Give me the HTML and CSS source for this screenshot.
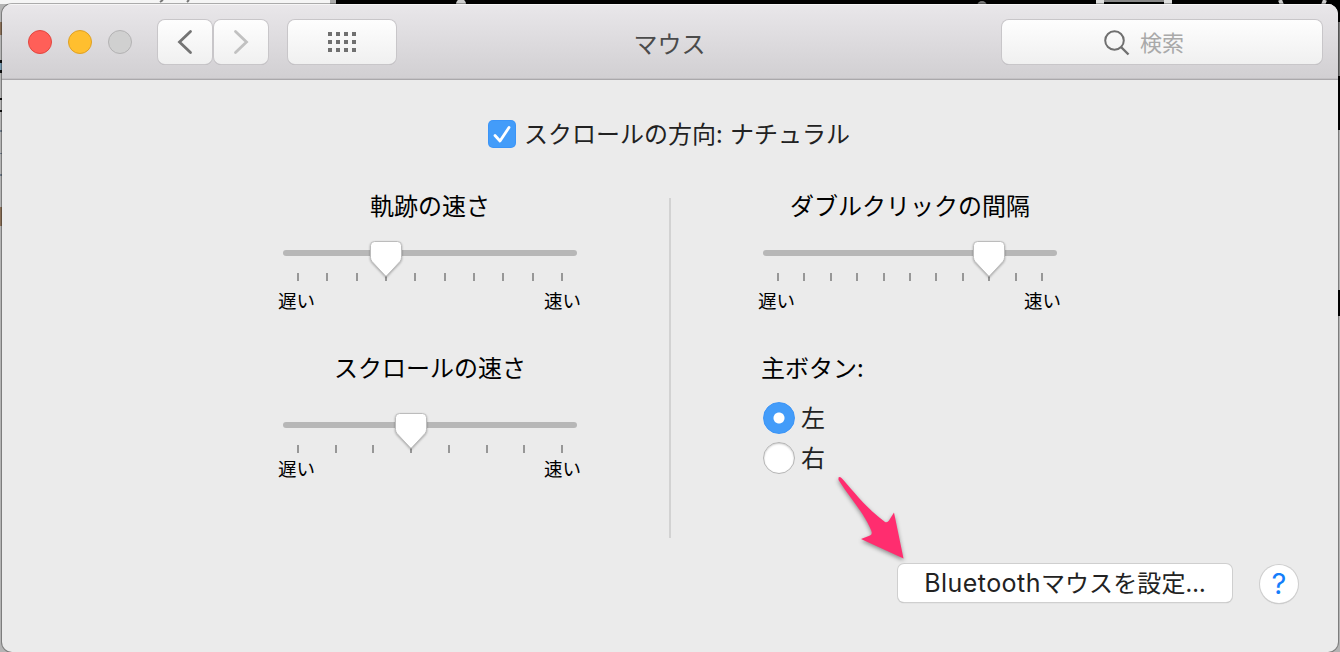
FILE: index.html
```html
<!DOCTYPE html>
<html lang="ja">
<head>
<meta charset="utf-8">
<title>マウス</title>
<link rel="stylesheet" href="styles.css">
</head>
<body>
<svg class="desktop" width="1340" height="652" viewBox="0 0 1340 652">
  <rect width="1340" height="652" fill="#b4b4b4"/>
  <rect width="332" height="4" fill="#f5f5f5"/>
  <rect x="330" width="6" height="4" fill="#aaa"/>
  <rect x="336" width="1004" height="4" fill="#000"/>
  <rect x="1320" width="20" height="130" fill="#000"/>
  <path d="M160 2l3-2M187 2l2-2" stroke="#777" stroke-width="2"/>
  <circle cx="461" cy="4" r="5" fill="#ccc"/>
  <circle cx="982" cy="6" r="5" fill="#777"/>
  <path d="M1100 4V0M1168 4V0" stroke="#ddd" stroke-width="8"/>
  <path d="M1104 1h60" stroke="#888" stroke-width="2"/>
  <path d="M1280 0l2 5M1325 0l-2 5" stroke="#ccc" stroke-width="4"/>
  <path d="M1339 22v54" stroke="#777" stroke-width="2"/>
  <path d="M1339 290v26" stroke="#000" stroke-width="2"/>
  <path d="M0 22h2v13H0zM0 207h2v19H0z" fill="#8a7058"/>
  <path d="M0 60h2v3H0zM0 70h2v3H0zM0 98h2v2H0zM0 110h2v2H0z" fill="#111"/>
  <path d="M0 63h2v7H0z" fill="#7b9eb5"/>
  <path d="M0 130h2v2H0zM0 153h2v1H0zM0 174h2v2H0z" fill="#6f7c8a"/>
</svg>
<div class="window">
  <header class="toolbar">
    <div class="lights">
      <span class="light close"></span>
      <span class="light minimize"></span>
      <span class="light disabled"></span>
    </div>
    <div class="nav">
      <button class="tool"><svg width="54" height="44" viewBox="0 0 54 44"><path d="M32.500 11.500L21.500 22L32.500 32.500" fill="none" stroke="#747474" stroke-width="2.800" stroke-linecap="round"/></svg></button>
      <button class="tool"><svg width="54" height="44" viewBox="0 0 54 44"><path d="M21.500 11.500L32.500 22L21.500 32.500" fill="none" stroke="#c1c1c1" stroke-width="2.800" stroke-linecap="round"/></svg></button>
    </div>
    <button class="tool grid-button"><svg width="28" height="20" viewBox="0 0 28 20" fill="#707070"><path d="M0 0h4v4H0zM8 0h4v4H8zM16 0h4v4h-4zM24 0h4v4h-4zM0 8h4v4H0zM8 8h4v4H8zM16 8h4v4h-4zM24 8h4v4h-4zM0 16h4v4H0zM8 16h4v4H8zM16 16h4v4h-4zM24 16h4v4h-4z"/></svg></button>
    <h1 class="title">マウス</h1>
    <div class="search">
      <svg width="26" height="26" viewBox="0 0 26 26" fill="none" stroke="#707070" stroke-width="2"><circle cx="10.500" cy="10.500" r="9.300"/><path d="M17 17l7.500 7.500" stroke-width="2.400"/></svg>
      <span>検索</span>
    </div>
  </header>
  <main class="content">
    <label class="check-row">
      <svg width="28" height="28" viewBox="0 0 28 28"><rect width="28" height="28" rx="5" fill="#3b94f7"/><rect x="1" y="1" width="26" height="26" rx="4" fill="#439cf9"/><path d="M7 15.500L12 21L21 7.500" fill="none" stroke="#fff" stroke-width="2.800" stroke-linecap="round" stroke-linejoin="round"/></svg>
      <span class="check-text">スクロールの方向: ナチュラル</span>
    </label>
    <div class="columns">
      <section class="column">
        <h2 class="heading">軌跡の速さ</h2>
        <svg class="slider" width="294" height="42" viewBox="0 0 294 42">
          <rect class="track" y="10" width="294" height="6" rx="3"/>
          <path class="ticks" d="M15 33v8M44 33v8M74 33v8M103 33v8M132 33v8M162 33v8M191 33v8M220 33v8M250 33v8M279 33v8"/>
          <path class="thumb" transform="translate(103 0)" d="M-11.500 1.500H11.500Q15.500 1.500 15.500 5.500V17.500Q15.500 19.500 14 21.500L0 36.500L-14 21.500Q-15.500 19.500-15.500 17.500V5.500Q-15.500 1.500-11.500 1.500Z"/>
        </svg>
        <div class="range"><span>遅い</span><span>速い</span></div>
        <h2 class="heading second">スクロールの速さ</h2>
        <svg class="slider lower" width="294" height="42" viewBox="0 0 294 42">
          <rect class="track" y="10" width="294" height="6" rx="3"/>
          <path class="ticks" d="M15 33v8M53 33v8M90 33v8M128 33v8M166 33v8M204 33v8M241 33v8M279 33v8"/>
          <path class="thumb" transform="translate(128 0)" d="M-11.500 1.500H11.500Q15.500 1.500 15.500 5.500V17.500Q15.500 19.500 14 21.500L0 36.500L-14 21.500Q-15.500 19.500-15.500 17.500V5.500Q-15.500 1.500-11.500 1.500Z"/>
        </svg>
        <div class="range tight"><span>遅い</span><span>速い</span></div>
      </section>
      <div class="divider"></div>
      <section class="column">
        <h2 class="heading">ダブルクリックの間隔</h2>
        <svg class="slider" width="294" height="42" viewBox="0 0 294 42">
          <rect class="track" y="10" width="294" height="6" rx="3"/>
          <path class="ticks" d="M15 33v8M41 33v8M68 33v8M94 33v8M121 33v8M147 33v8M173 33v8M200 33v8M226 33v8M253 33v8M279 33v8"/>
          <path class="thumb" transform="translate(226 0)" d="M-11.500 1.500H11.500Q15.500 1.500 15.500 5.500V17.500Q15.500 19.500 14 21.500L0 36.500L-14 21.500Q-15.500 19.500-15.500 17.500V5.500Q-15.500 1.500-11.500 1.500Z"/>
        </svg>
        <div class="range"><span>遅い</span><span>速い</span></div>
        <h2 class="heading second left">主ボタン:</h2>
        <div class="radios">
          <label class="radio-row"><span class="radio on"></span><span class="radio-text">左</span></label>
          <label class="radio-row"><span class="radio"></span><span class="radio-text">右</span></label>
        </div>
      </section>
    </div>
    <footer class="footer">
      <button class="push"><span class="latin">Bluetooth</span><span class="kana">マウスを設定...</span></button>
      <button class="help">?</button>
    </footer>
  </main>
</div>
<svg class="arrow" width="80" height="96" viewBox="0 0 80 96"><path d="M8.500 7.500Q10 6 12.500 9C26 24.500 38 39.500 55 52Q57.500 53 59 50.500L64 42.500L73.500 88.500L31 69L40 65.500Q43 64.500 41 60C34 43 20 28 8.500 10Z" fill="#ff2d6f"/></svg>
</body>
</html>
```
FILE: styles.css
```css
* { box-sizing: border-box; }

body {
  margin: 0;
  height: 652px;
  padding: 4px 2px 0;
  overflow: hidden;
  position: relative;
  background: #b4b4b4;
  font-family: "Noto Sans CJK JP", sans-serif;
  color: #000;
}

button { font: inherit; padding: 0; border: 0; }
svg { display: block; flex: none; }

.desktop { position: absolute; left: 0; top: 0; }

.window {
  position: relative;
  height: 648px;
  border-radius: 10px;
  overflow: hidden;
  background: #ebebeb;
  box-shadow: 0 0 0 1px rgba(0, 0, 0, .3);
}

.toolbar {
  height: 76px;
  display: flex;
  align-items: flex-start;
  padding: 16px 16px 0 26px;
  background: linear-gradient(#e9e7ea, #d1cfd2);
  border-bottom: 1px solid #aaa8ab;
  box-shadow: inset 0 1px #f6f5f6, inset 0 -1px #c4c2c5;
}

.lights { display: flex; gap: 16px; padding-top: 10px; width: 130px; }
.light { width: 24px; height: 24px; border-radius: 50%; border: 1px solid; }
.close { background: #ff5f58; border-color: #e2463f; }
.minimize { background: #ffbf2f; border-color: #dfa023; }
.disabled { background: #d0d0d0; border-color: #b3b2b3; }

.nav { display: flex; gap: 2px; margin-right: 20px; }

.tool, .search {
  height: 44px;
  border-radius: 7px;
  background: linear-gradient(#fefefe, #f0f0f0);
  box-shadow: 0 0 0 1px #c8c6c9, 0 1px 0 0 #aaa8ab;
}
.tool { width: 54px; }
.grid-button { width: 108px; display: flex; align-items: center; justify-content: center; }

.title {
  flex: 1;
  margin: 0;
  padding-right: 59px;
  text-align: center;
  font-size: 24px;
  font-weight: 400;
  line-height: 46px;
  color: #4b4b4b;
}

.search {
  width: 320px;
  display: flex;
  align-items: center;
  justify-content: center;
  gap: 10px;
  padding-right: 36px;
  font-size: 22px;
  line-height: 42px;
  color: #a9a9a9;
}
.search svg { margin-top: 2px; }
.search span { height: 44px; }

.content { padding: 38px 37px 0 281px; }

.check-row {
  display: flex;
  align-items: center;
  gap: 8px;
  width: 366px;
  height: 32px;
  margin-left: 205px;
  font-size: 24px;
  line-height: 32px;
  word-spacing: 2px;
  color: #222;
  white-space: nowrap;
}

.check-text { height: 34px; }

.columns { display: flex; margin-top: 39px; height: 349px; }
.column { width: 294px; }
.divider { width: 2px; height: 340px; margin: 9px 92px 0; background: #d2d2d2; }

.heading { margin: 0; font-size: 24px; font-weight: 400; line-height: 32px; text-align: center; white-space: nowrap; }
.second { margin-top: 39px; }
.left { text-align: left; margin-left: -2px; }

.slider { margin-top: 19px; overflow: visible; }
.lower { margin-top: 29px; }
.track { fill: #b7b7b7; }
.ticks { stroke: #979797; stroke-width: 2; }
.thumb { fill: #fff; stroke: #bcbcbc; stroke-width: 1; filter: drop-shadow(0 1px 1px rgba(0, 0, 0, .3)); }

.range { display: flex; justify-content: space-between; margin: 6px -4px 0 -5px; font-size: 18.500px; line-height: 24px; }
.tight { margin-top: 2px; }

.radios { display: grid; gap: 8px; margin-top: 19px; }
.radio-row { display: flex; align-items: center; gap: 6px; height: 32px; font-size: 24px; line-height: 32px; color: #222; }
.radio-text { height: 34px; }
.radio { width: 32px; height: 32px; border-radius: 50%; background: #fff; border: 1px solid #b5b5b5; box-shadow: inset 0 1px 2px #ccc; }
.on { background: radial-gradient(circle, #fff 5px, #439cf9 6px); border-color: #3b94f7; box-shadow: none; }

.footer { display: flex; align-items: center; justify-content: flex-end; gap: 28px; height: 40px; margin: 25px 3px 0 0; }
.push {
  width: 334px;
  height: 38px;
  border-radius: 6px;
  background: #fff;
  box-shadow: 0 0 0 1px #cfcfcf, 0 1px 1px 0 #a5a5a5;
  font-size: 24px;
  line-height: 36px;
  padding-bottom: 2px;
  color: #222;
  white-space: nowrap;
}
.latin { font-family: Inter, "Noto Sans", sans-serif; font-size: 25px; letter-spacing: .45px; }
.kana { letter-spacing: .1px; }
.help {
  width: 38px;
  height: 38px;
  margin-top: 1px;
  border-radius: 50%;
  background: #fff;
  box-shadow: 0 0 0 1px #cfcfcf, 0 1px 1px 0 #a5a5a5;
  font-family: Inter, sans-serif;
  font-size: 29px;
  font-weight: 400;
  line-height: 38px;
  color: #147efb;
}

.arrow { position: absolute; left: 830px; top: 470px; filter: drop-shadow(0 2px 2px rgba(0, 0, 0, .4)); }
```
